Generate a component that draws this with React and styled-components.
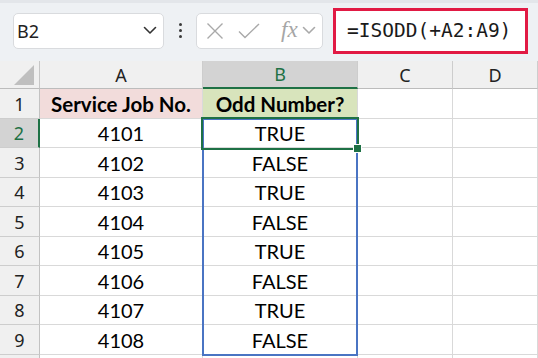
import React from "react";
import styled, { createGlobalStyle, css } from "styled-components";

const Global = createGlobalStyle`
  html, body { margin: 0; padding: 0; background: #ffffff; }
  body { width: 538px; height: 358px; overflow: hidden; font-family: "Noto Sans", sans-serif; }
  #root { width: 538px; height: 358px; overflow: hidden; }
`;

const Page = styled.div`
  width: 538px;
  height: 358px;
  display: flex;
  flex-direction: column;
  overflow: hidden;
`;

const Toolbar = styled.div`
  height: 61px;
  flex: none;
  box-sizing: border-box;
  background: #eef1f4;
  border-top: 3px solid #e3e6ea;
  display: flex;
  align-items: center;
  padding: 0 0 0 13px;
`;

const NameBox = styled.div`
  width: 151px;
  height: 36px;
  box-sizing: border-box;
  margin-top: -3px;
  background: #fff;
  border: 1px solid #d9dbde;
  border-radius: 5px;
  display: flex;
  align-items: center;
  justify-content: space-between;
  padding: 0 6px 0 3px;
  font-family: "Noto Sans", sans-serif;
  font-size: 18px;
  color: #222;
`;

const Dots = styled.div`
  width: 32px;
  display: flex;
  flex-direction: column;
  align-items: center;
  gap: 3px;
  margin-top: -3px;
  span {
    width: 3px;
    height: 3px;
    border-radius: 50%;
    background: #3a3a3a;
  }
`;

const FxBox = styled.div`
  width: 127px;
  height: 36px;
  box-sizing: border-box;
  margin-top: -3px;
  background: #fff;
  border: 1px solid #d9dbde;
  border-radius: 5px;
  display: flex;
  align-items: center;
  padding: 0 0 0 9px;
`;

const IconSlot = styled.span`
  display: flex;
  margin-left: ${(p) => p.$ml || 0}px;
`;

const Fx = styled.span`
  font-family: "Liberation Serif", serif;
  font-style: italic;
  font-size: 23px;
  color: #a6a6a6;
  margin-left: 21px;
  line-height: 1;
  margin-top: -3px;
`;

const Formula = styled.div`
  margin-left: 10px;
  width: 195px;
  height: 46px;
  box-sizing: border-box;
  margin-top: -3px;
  background: #fff;
  border: 3px solid #e11a44;
  display: flex;
  align-items: center;
  padding-left: 11px;
  font-family: "DejaVu Sans Mono", monospace;
  font-size: 19.5px;
  color: #1a1a1a;
`;

const gridTemplate = css`
  display: grid;
  grid-template-columns: 40px 163px 155px 95px 85px;
  grid-template-rows: 28px 30px 29px 30px 29px 30px 29px 30px 29px 30px 30px;
  grid-area: 1 / 1;
`;

const SheetArea = styled.div`
  display: grid;
  background: #fff;
`;

const Sheet = styled.div`
  ${gridTemplate};
`;

const Overlay = styled.div`
  ${gridTemplate};
  pointer-events: none;
  z-index: 1;
`;

const headerBase = css`
  box-sizing: border-box;
  background: #f0f0f0;
  font-family: "Noto Sans", sans-serif;
  font-size: 18px;
  display: flex;
  align-items: center;
  justify-content: center;
  color: #222;
`;

const Corner = styled.div`
  ${headerBase};
  border-right: 1px solid #c6c6c6;
  border-bottom: 1px solid #bcbcbc;
  justify-content: flex-end;
  align-items: flex-end;
  padding: 0 5px 3px 0;
`;

const ColHead = styled.div`
  ${headerBase};
  border-right: 1px solid #cdcdcd;
  border-bottom: ${(p) => (p.$active ? "2px solid #1e7145" : "1px solid #bcbcbc")};
  background: ${(p) => (p.$active ? "#d3d3d3" : "#f0f0f0")};
  color: ${(p) => (p.$active ? "#1e7145" : "#222")};
`;

const RowHead = styled.div`
  ${headerBase};
  border-bottom: 1px solid #cdcdcd;
  border-right: ${(p) => (p.$active ? "2px solid #1e7145" : "1px solid #c2c2c2")};
  background: ${(p) => (p.$active ? "#d3d3d3" : "#f0f0f0")};
  color: ${(p) => (p.$active ? "#1e7145" : "#222")};
`;

const Cell = styled.div`
  box-sizing: border-box;
  border-right: 1px solid #d9d9d9;
  border-bottom: 1px solid #d9d9d9;
  background: ${(p) => p.$fill || "#fff"};
  font-family: "Lato", sans-serif;
  font-size: ${(p) => (p.$bold ? 20.5 : 20)}px;
  font-weight: ${(p) => (p.$bold ? 700 : 400)};
  color: #000;
  display: flex;
  align-items: center;
  justify-content: center;
  white-space: nowrap;
  overflow: hidden;
`;

const RangeBox = styled.div`
  grid-column: 3;
  grid-row: 3 / 11;
  margin: -1px 0 -1px -1px;
  border: 2px solid #4a74c3;
`;

const SelectBox = styled.div`
  grid-column: 3;
  grid-row: 3;
  margin: -2px -1px -2px -2px;
  border: 2px solid #1e7145;
  position: relative;
  z-index: 1;
`;

const Handle = styled.div`
  position: absolute;
  right: -5px;
  bottom: -5px;
  width: 7px;
  height: 7px;
  background: #1e7145;
  border: 1px solid #fff;
`;

const data = [4101, 4102, 4103, 4104, 4105, 4106, 4107, 4108];

const Chevron = ({ color = "#333", w = 14 }) => (
  <svg width={w} height="9" viewBox="0 0 14 9" fill="none">
    <path d="M1.5 1.5 L7 7 L12.5 1.5" stroke={color} strokeWidth="1.6" strokeLinecap="round" strokeLinejoin="round" />
  </svg>
);

export default function App() {
  return (
    <Page>
      <Global />
      <Toolbar>
        <NameBox>
          <span>B2</span>
          <Chevron />
        </NameBox>
        <Dots>
          <span />
          <span />
          <span />
        </Dots>
        <FxBox>
          <IconSlot>
            <svg width="18" height="18" viewBox="0 0 18 18" fill="none">
              <path d="M1.5 1.5 L16.5 16.5 M16.5 1.5 L1.5 16.5" stroke="#a9a9a9" strokeWidth="1.4" />
            </svg>
          </IconSlot>
          <IconSlot $ml={14}>
            <svg width="22" height="16" viewBox="0 0 22 16" fill="none">
              <path d="M1 8.5 L7 14.5 L21 1" stroke="#a9a9a9" strokeWidth="1.4" />
            </svg>
          </IconSlot>
          <Fx>fx</Fx>
          <IconSlot $ml={4}>
            <Chevron color="#a9a9a9" w={14} />
          </IconSlot>
        </FxBox>
        <Formula>=ISODD(+A2:A9)</Formula>
      </Toolbar>
      <SheetArea>
        <Sheet>
          <Corner>
            <svg width="20" height="20" viewBox="0 0 20 20">
              <path d="M20 0 L20 20 L0 20 Z" fill="#bfbfbf" />
            </svg>
          </Corner>
          <ColHead>A</ColHead>
          <ColHead $active>B</ColHead>
          <ColHead>C</ColHead>
          <ColHead>D</ColHead>

          <RowHead>1</RowHead>
          <Cell $bold $fill="#f2dcdb">Service Job No.</Cell>
          <Cell $bold $fill="#d8e4bc">Odd Number?</Cell>
          <Cell />
          <Cell />

          {data.map((n, i) => (
            <React.Fragment key={n}>
              <RowHead $active={i === 0}>{i + 2}</RowHead>
              <Cell>{n}</Cell>
              <Cell>{n % 2 === 1 ? "TRUE" : "FALSE"}</Cell>
              <Cell />
              <Cell />
            </React.Fragment>
          ))}

          <RowHead />
          <Cell />
          <Cell />
          <Cell />
          <Cell />
        </Sheet>
        <Overlay>
          <RangeBox />
          <SelectBox>
            <Handle />
          </SelectBox>
        </Overlay>
      </SheetArea>
    </Page>
  );
}
